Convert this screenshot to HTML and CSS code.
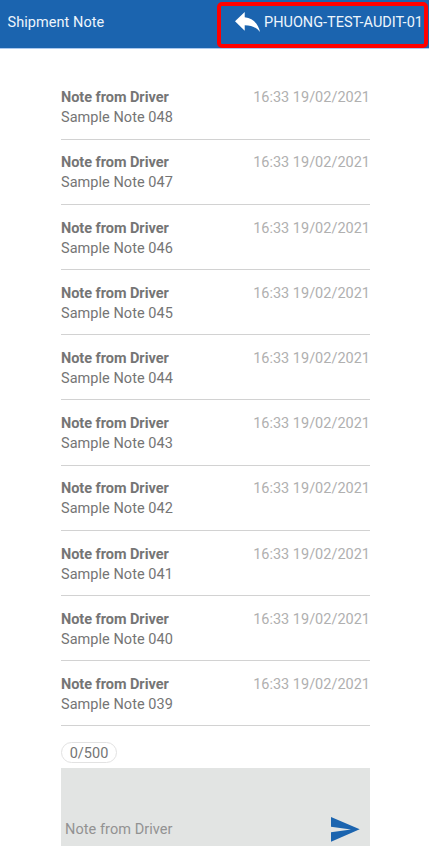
FILE: index.html
```html
<!DOCTYPE html>
<html lang="en">
<head>
<meta charset="utf-8">
<title>Shipment Note</title>
<link rel="stylesheet" href="styles.css">
</head>
<body>
<header class="bar">
  <h1 class="title">Shipment Note</h1>
  <div class="back">
    <svg class="reply" viewBox="3 5 18 15" preserveAspectRatio="none" aria-hidden="true"><path d="M10 9V5l-7 7 7 7v-4.1c5 0 8.5 1.6 11 5.1-1-5-4-10-11-11z"/></svg>
    <span class="ref">PHUONG-TEST-AUDIT-01</span>
  </div>
</header>
<main class="content">
  <ul class="notes">
    <li class="note"><div class="head"><b>Note from Driver</b><time>16:33 19/02/2021</time></div><p>Sample Note 048</p></li>
    <li class="note"><div class="head"><b>Note from Driver</b><time>16:33 19/02/2021</time></div><p>Sample Note 047</p></li>
    <li class="note"><div class="head"><b>Note from Driver</b><time>16:33 19/02/2021</time></div><p>Sample Note 046</p></li>
    <li class="note"><div class="head"><b>Note from Driver</b><time>16:33 19/02/2021</time></div><p>Sample Note 045</p></li>
    <li class="note"><div class="head"><b>Note from Driver</b><time>16:33 19/02/2021</time></div><p>Sample Note 044</p></li>
    <li class="note"><div class="head"><b>Note from Driver</b><time>16:33 19/02/2021</time></div><p>Sample Note 043</p></li>
    <li class="note"><div class="head"><b>Note from Driver</b><time>16:33 19/02/2021</time></div><p>Sample Note 042</p></li>
    <li class="note"><div class="head"><b>Note from Driver</b><time>16:33 19/02/2021</time></div><p>Sample Note 041</p></li>
    <li class="note"><div class="head"><b>Note from Driver</b><time>16:33 19/02/2021</time></div><p>Sample Note 040</p></li>
    <li class="note"><div class="head"><b>Note from Driver</b><time>16:33 19/02/2021</time></div><p>Sample Note 039</p></li>
  </ul>
  <div class="count">0/500</div>
  <div class="composer">
    <span class="hint">Note from Driver</span>
    <svg class="send" viewBox="0 0 29 25" aria-hidden="true"><path d="M0 0L28.7 12.3L0 24.8V15.2L20 12.5L0 9.8z"/></svg>
  </div>
</main>
</body>
</html>
```
FILE: styles.css
```css
* { box-sizing: border-box; }
body {
  margin: 0;
  height: 846px;
  overflow: hidden;
  background: #fff;
  color: #757575;
  font: 14.5px/20px Roboto, sans-serif;
}
.bar {
  display: flex;
  justify-content: space-between;
  height: 49px;
  padding: 2px 1px 0 7.5px;
  background: #1b64af;
  border-bottom: 1px solid #a9c8ee;
  color: #edf5fc;
}
.title {
  margin: 11px 0 0;
  font-size: 14.5px;
  line-height: 20px;
  font-weight: 400;
  letter-spacing: 0.06px;
}
.back {
  display: flex;
  align-items: flex-start;
  width: 211px;
  height: 46px;
  padding: 6px 0 0 14px;
  border: 4px solid #f00;
  border-radius: 5px;
}
.reply {
  flex: none;
  width: 25px;
  height: 20px;
  margin-right: 4px;
  fill: #fff;
}
.ref {
  margin-top: 1px;
  font-size: 14.5px;
  white-space: nowrap;
}
.content {
  width: 309px;
  margin: 38.5px 0 0 61px;
}
.notes {
  margin: 0;
  padding: 0;
  list-style: none;
}
.note {
  height: 65.2px;
  padding-top: 0.8px;
}
.note::after {
  content: "";
  display: block;
  height: 1px;
  margin-top: 10.4px;
  background: #d2d2d2;
}
.head {
  display: flex;
  justify-content: space-between;
}
.head b {
  font-weight: 700;
  letter-spacing: -0.04px;
}
.head time { color: #b0b0b0; }
.note p {
  margin: 0;
  letter-spacing: 0.04px;
}
.count {
  width: 56px;
  height: 21px;
  margin-top: 2.5px;
  border: 1px solid #e2e2e2;
  border-radius: 11px;
  text-align: center;
  line-height: 22px;
}
.composer {
  display: flex;
  justify-content: space-between;
  height: 78px;
  margin-top: 5px;
  padding: 49px 10px 0 4px;
  background: #e2e4e3;
}
.hint {
  margin-top: 3px;
  color: #929292;
  letter-spacing: 0.06px;
}
.send {
  width: 29px;
  height: 25px;
  fill: #1b64af;
}
```
